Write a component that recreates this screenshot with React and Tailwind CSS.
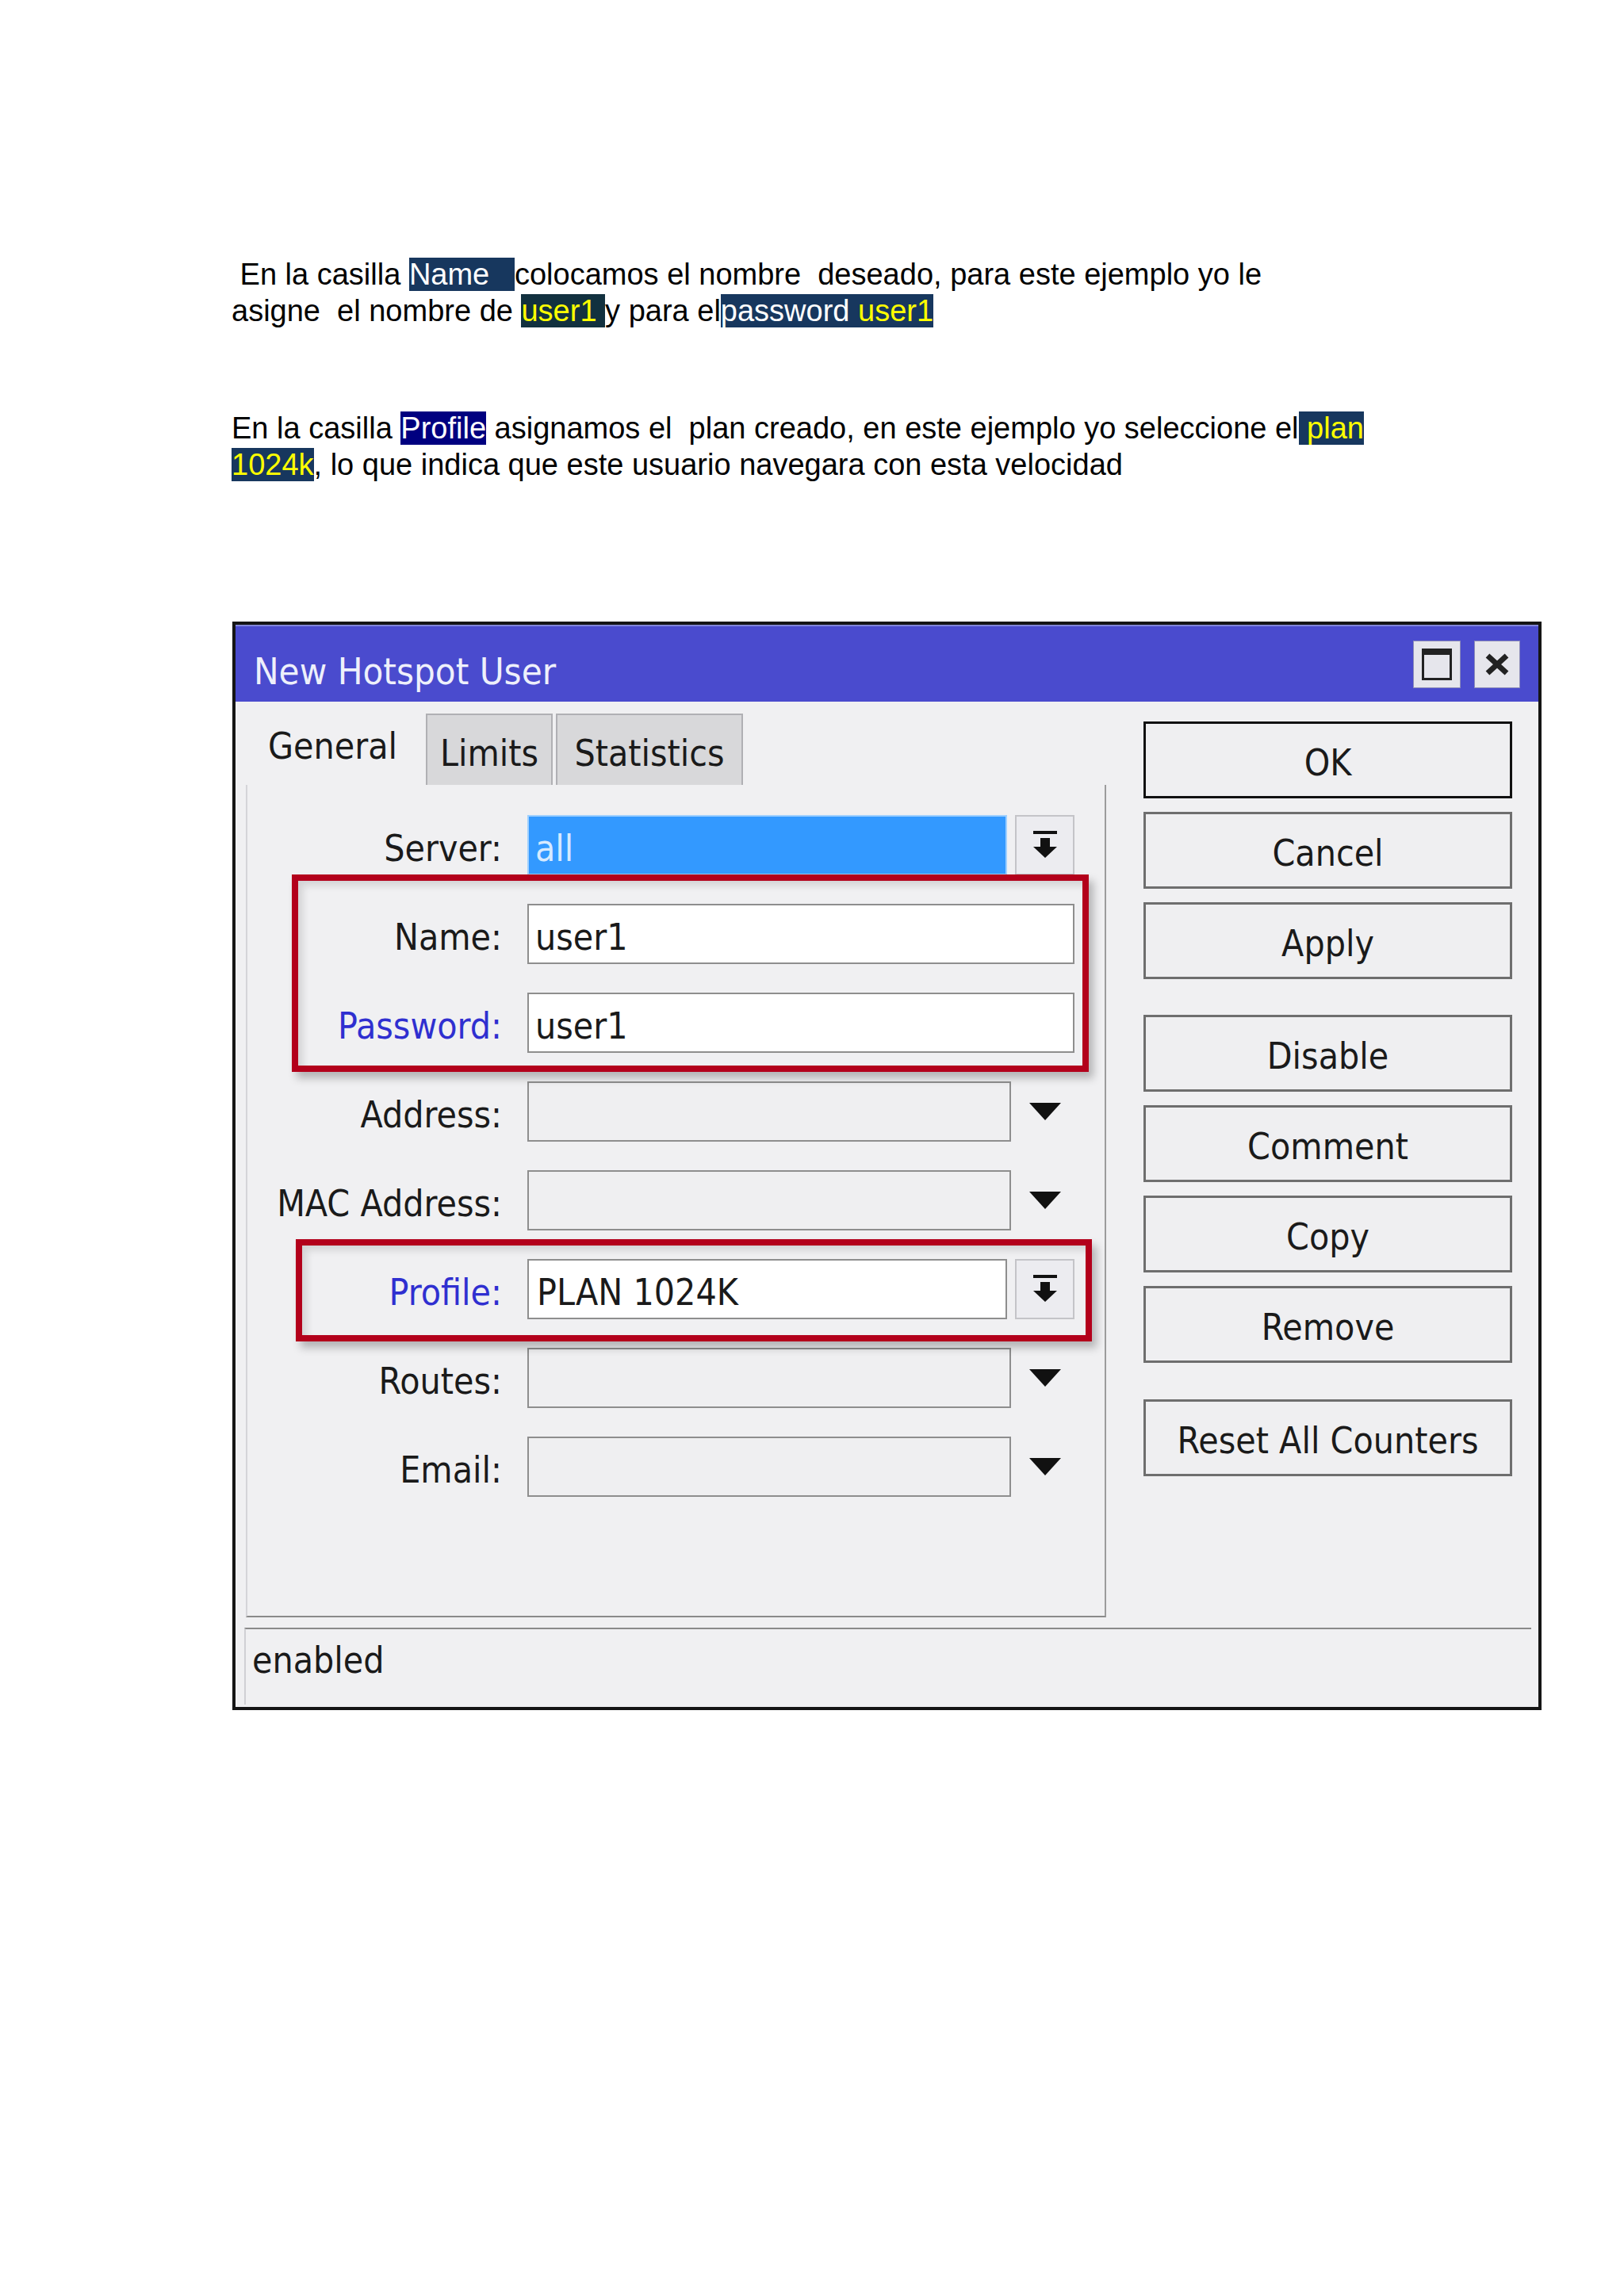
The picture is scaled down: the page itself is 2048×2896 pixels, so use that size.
import React from 'react';

const HL_NAVY = 'bg-[#17375e]';

function TriangleDown() {
    return (
        <svg width="40" height="22" viewBox="0 0 40 22">
            <path d="M0 0h40L20 22z" fill="#111" />
        </svg>
    );
}

function DropBtnIcon() {
    return (
        <svg width="34" height="36" viewBox="0 0 34 36">
            <rect x="2" y="0" width="30" height="4" fill="#111" />
            <path d="M11 9h12v11h9L17 34 2 20h9z" fill="#111" />
        </svg>
    );
}

const Label = ({ children, blue }) => (
    <div className={`w-[321px] shrink-0 text-right pt-[8px] ${blue ? 'text-[#2f2fd0]' : 'text-[#1a1a1a]'}`}>
        {children}
    </div>
);

const Row = ({ children }) => <div className="flex items-center h-[76px]">{children}</div>;

const DropBtn = () => (
    <div className="ml-[10px] w-[75px] h-[76px] border-2 border-[#c4c4c8] bg-[#ececf0] flex items-center justify-center">
        <DropBtnIcon />
    </div>
);

const EmptyField = () => (
    <>
        <div className="ml-[32px] w-[610px] h-[76px] border-2 border-[#8e8e8e] bg-[#efeff1]"></div>
        <div className="w-[86px] flex items-center justify-center">
            <TriangleDown />
        </div>
    </>
);

const Btn = ({ children, main, className = '' }) => (
    <div
        className={`h-[97px] flex items-center justify-center bg-[#efeff1] ${
            main ? 'border-[3px] border-[#111]' : 'border-[3px] border-[#6e6e6e]'
        } ${className}`}
    >
        <span className="pt-[6px]">{children}</span>
    </div>
);

const App = () => {
    return (
        <div className="w-[2048px] min-h-[2896px] bg-white pt-[323px] pl-[292px] font-['Liberation_Sans',Arial,sans-serif] text-black">
            {/* Intro text */}
            <div className="text-[38px] leading-[46px] whitespace-pre">
                <div>
                    {' En la casilla '}
                    <span className={`${HL_NAVY} text-white`}>{'Name   '}</span>
                    {'colocamos el nombre  deseado, para este ejemplo yo le'}
                </div>
                <div>
                    {'asigne  el nombre de '}
                    <span className="bg-[#12313f] text-[#ffff00]">{'user1 '}</span>
                    {'y para el'}
                    <span className={`${HL_NAVY} text-white`}>
                        {'password '}
                        <span className="text-[#ffff00]">user1</span>
                    </span>
                </div>
            </div>

            <div className="mt-[102px] text-[38px] leading-[46px] whitespace-pre">
                <div>
                    {'En la casilla '}
                    <span className="bg-[#000080] text-white">Profile</span>
                    {' asignamos el  plan creado, en este ejemplo yo seleccione el'}
                    <span className={`${HL_NAVY} text-[#ffff00]`}>{' plan'}</span>
                </div>
                <div>
                    <span className={`${HL_NAVY} text-[#ffff00]`}>1024k</span>
                    {', lo que indica que este usuario navegara con esta velocidad'}
                </div>
            </div>

            {/* Winbox dialog */}
            <div className="relative mt-[175px] ml-px w-[1651px] h-[1373px] border-4 border-[#151515] bg-[#f0f0f2] flex flex-col font-['DejaVu_Sans_Condensed','DejaVu_Sans',sans-serif] text-[46px] leading-none text-[#1a1a1a]">
                {/* Title bar */}
                <div className="h-[97px] shrink-0 bg-[#4a4bce] border-t-2 border-[#8186da] flex items-center justify-between pl-[23px] pr-[23px]">
                    <span className="text-[47px] text-[#eef0fb] pt-[18px]">New Hotspot User</span>
                    <div className="flex gap-[17px]">
                        <div className="w-[60px] h-[60px] bg-[#e6e6ec] border border-[#8c8cb8] flex items-center justify-center">
                            <svg width="38" height="40" viewBox="0 0 38 40">
                                <rect x="1.5" y="1.5" width="35" height="37" fill="none" stroke="#222" strokeWidth="3" />
                                <rect x="0" y="0" width="38" height="8" fill="#222" />
                            </svg>
                        </div>
                        <div className="w-[58px] h-[60px] bg-[#e6e6ec] border border-[#8c8cb8] flex items-center justify-center">
                            <svg width="32" height="28" viewBox="0 0 32 28">
                                <path d="M4 3L28 25M28 3L4 25" stroke="#222" strokeWidth="7" />
                            </svg>
                        </div>
                    </div>
                </div>

                {/* Body */}
                <div className="flex-1 flex flex-col">
                    <div className="flex h-[1155px]">
                        {/* Tabs + form */}
                        <div className="ml-[13px] w-[1085px] flex flex-col">
                            <div className="h-[105px] shrink-0 flex items-end">
                                <div className="w-[227px] h-[100px] pt-[28px] pl-[28px]">General</div>
                                <div className="w-[160px] h-[90px] bg-[#d8d8da] border-2 border-b-0 border-[#b0b0b4] text-center pt-[25px]">
                                    Limits
                                </div>
                                <div className="ml-[4px] w-[236px] h-[90px] bg-[#d8d8da] border-2 border-b-0 border-[#b0b0b4] text-center pt-[25px]">
                                    Statistics
                                </div>
                            </div>

                            <div className="flex-1 border-2 border-t-0 border-[#d4d4d8] border-r-[#9c9c9c] border-b-[#8a8a8a] pt-[38px] flex flex-col gap-[36px]">
                                <Row>
                                    <Label>Server:</Label>
                                    <div className="ml-[32px] w-[605px] h-[76px] border-2 border-[#9fd0ff] bg-[#3399ff] pl-[8px] flex items-center">
                                        <span className="pt-[8px] text-[#d6eaff]">all</span>
                                    </div>
                                    <DropBtn />
                                </Row>
                                <Row>
                                    <Label>Name:</Label>
                                    <div className="ml-[32px] w-[690px] h-[76px] border-2 border-[#8e8e8e] bg-white pl-[8px] flex items-center">
                                        <span className="pt-[8px]">user1</span>
                                    </div>
                                </Row>
                                <Row>
                                    <Label blue>Password:</Label>
                                    <div className="ml-[32px] w-[690px] h-[76px] border-2 border-[#8e8e8e] bg-white pl-[8px] flex items-center">
                                        <span className="pt-[8px]">user1</span>
                                    </div>
                                </Row>
                                <Row>
                                    <Label>Address:</Label>
                                    <EmptyField />
                                </Row>
                                <Row>
                                    <Label>MAC Address:</Label>
                                    <EmptyField />
                                </Row>
                                <Row>
                                    <Label blue>Profile:</Label>
                                    <div className="ml-[32px] w-[605px] h-[76px] border-2 border-[#8e8e8e] bg-white pl-[10px] flex items-center">
                                        <span className="pt-[8px]">PLAN 1024K</span>
                                    </div>
                                    <DropBtn />
                                </Row>
                                <Row>
                                    <Label>Routes:</Label>
                                    <EmptyField />
                                </Row>
                                <Row>
                                    <Label>Email:</Label>
                                    <EmptyField />
                                </Row>
                            </div>
                        </div>

                        {/* Buttons */}
                        <div className="ml-[47px] w-[465px] pt-[25px] flex flex-col">
                            <Btn main>OK</Btn>
                            <Btn className="mt-[17px]">Cancel</Btn>
                            <Btn className="mt-[17px]">Apply</Btn>
                            <Btn className="mt-[45px]">Disable</Btn>
                            <Btn className="mt-[17px]">Comment</Btn>
                            <Btn className="mt-[17px]">Copy</Btn>
                            <Btn className="mt-[17px]">Remove</Btn>
                            <Btn className="mt-[46px]">Reset All Counters</Btn>
                        </div>
                    </div>

                    {/* Status bar */}
                    <div className="mt-[13px] ml-[11px] mr-[9px] h-[97px] border-t-2 border-l-2 border-[#8a8a8a] border-l-[#d0d0d4] pl-[8px] pt-[16px]">
                        enabled
                    </div>
                </div>

                {/* Red highlight frames */}
                <div className="absolute left-[71px] top-[315px] w-[1005px] h-[249px] border-[8px] border-[#b3001b] shadow-[6px_8px_10px_rgba(0,0,0,0.25),inset_6px_6px_10px_rgba(0,0,0,0.12)]"></div>
                <div className="absolute left-[76px] top-[775px] w-[1004px] h-[129px] border-[8px] border-[#b3001b] shadow-[6px_8px_10px_rgba(0,0,0,0.25),inset_6px_6px_10px_rgba(0,0,0,0.12)]"></div>
            </div>
        </div>
    );
};

export default App;
